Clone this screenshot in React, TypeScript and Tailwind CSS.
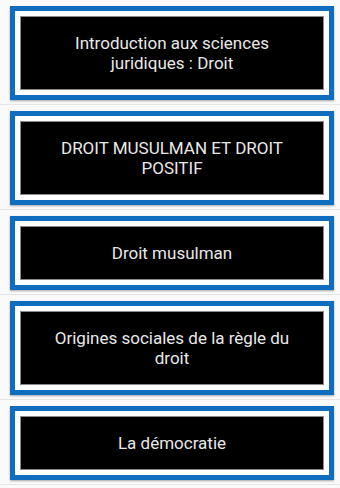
const chapters = [
  "Introduction aux sciences juridiques : Droit",
  "DROIT MUSULMAN ET DROIT POSITIF",
  "Droit musulman",
  "Origines sociales de la règle du droit",
  "La démocratie",
];

function ChapterCard({ title }: { title: string }) {
  return (
    <div className="ml-[10px] mr-[6px] border-[5px] border-[#0f6dbf] bg-white p-[5px] shadow-[0_1px_2px_rgba(0,0,0,0.35)]">
      <div className="border border-[#8a8a8a] bg-black px-5 py-4 text-center text-[17px] leading-5 text-[#e8e8e8]">
        {title}
      </div>
    </div>
  );
}

export default function App() {
  return (
    <div className="h-[488px] overflow-hidden bg-[#fafafa] font-['Roboto',sans-serif]">
      {chapters.map((title) => (
        <div key={title} className="border-b border-[#e4e4e4] pt-[6px] pb-[4px]">
          <ChapterCard title={title} />
        </div>
      ))}
    </div>
  );
}
